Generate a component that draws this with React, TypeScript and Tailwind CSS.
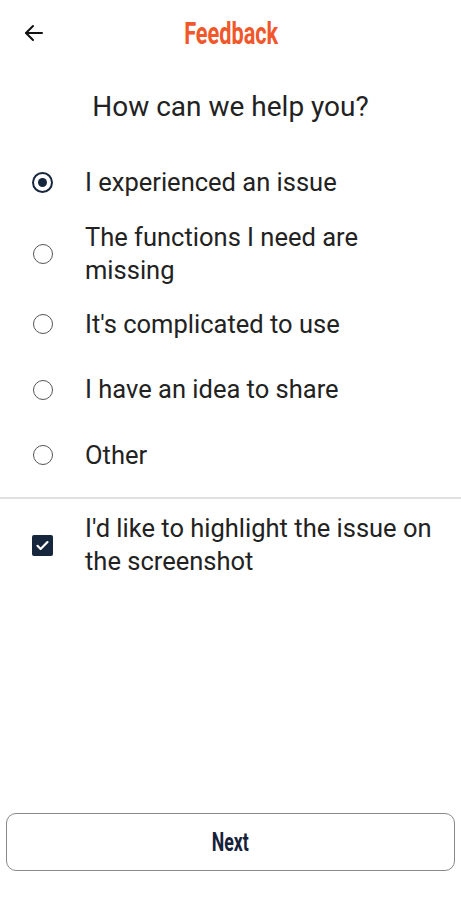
import React from "react";

const options = [
  "I experienced an issue",
  "The functions I need are missing",
  "It's complicated to use",
  "I have an idea to share",
  "Other",
];

export default function App() {
  return (
    <div className="w-[461px] h-[900px] bg-white flex flex-col text-[#222]" style={{ fontFamily: "Roboto, 'Noto Sans', sans-serif" }}>
      <div className="h-[66px] flex items-center relative">
        <div className="absolute left-[22px] top-[21px]">
          <svg width="24" height="24" viewBox="0 0 24 24" fill="none" stroke="#111" strokeWidth="2" strokeLinecap="round" strokeLinejoin="round">
            <path d="M20 12H4" />
            <path d="M11 5l-7 7 7 7" />
          </svg>
        </div>
        <div className="flex-1 flex justify-center pl-[2px]">
          <span className="inline-block text-[31px] font-bold text-[#f0572a] scale-x-[0.7] leading-none">Feedback</span>
        </div>
      </div>
      <div className="text-center text-[28px] leading-[34px] mt-[24px] text-[#222]">How can we help you?</div>
      <div className="flex flex-col mt-[26px]">
        {options.map((o, i) => (
          <div key={i} className="flex items-center min-h-[65.5px] py-[5px]">
            <div className="w-[85px] flex justify-center shrink-0">
              {i === 0 ? (
                <div className="w-[21px] h-[21px] rounded-full border-[2.5px] border-[#16263d] flex items-center justify-center">
                  <div className="w-[9px] h-[9px] rounded-full bg-[#16263d]" />
                </div>
              ) : (
                <div className="w-[20px] h-[20px] rounded-full border-[1.5px] border-[#555]" />
              )}
            </div>
            <div className="text-[25.5px] leading-[33px] pr-[20px] text-[#222]">{o}</div>
          </div>
        ))}
      </div>
      <div className="h-[2px] bg-[#e0e0e0] mt-[9px]" />
      <div className="flex items-center mt-[13px]">
        <div className="w-[85px] flex justify-center shrink-0">
          <div className="w-[21px] h-[21px] rounded-[2px] bg-[#16263d] flex items-center justify-center">
            <svg width="15" height="15" viewBox="0 0 24 24" fill="none" stroke="white" strokeWidth="3.5" strokeLinecap="round" strokeLinejoin="round">
              <path d="M4 12.5l5 5L20 6.5" />
            </svg>
          </div>
        </div>
        <div className="text-[25.5px] leading-[33px] pr-[20px] text-[#222]">I'd like to highlight the issue on the screenshot</div>
      </div>
      <div className="flex-1" />
      <div className="px-[6px] pb-[29px]">
        <div className="h-[58px] rounded-[10px] border-[1.5px] border-[#888] flex items-center justify-center">
          <span className="inline-block text-[26px] font-bold text-[#16213a] scale-x-[0.68] leading-none">Next</span>
        </div>
      </div>
    </div>
  );
}
